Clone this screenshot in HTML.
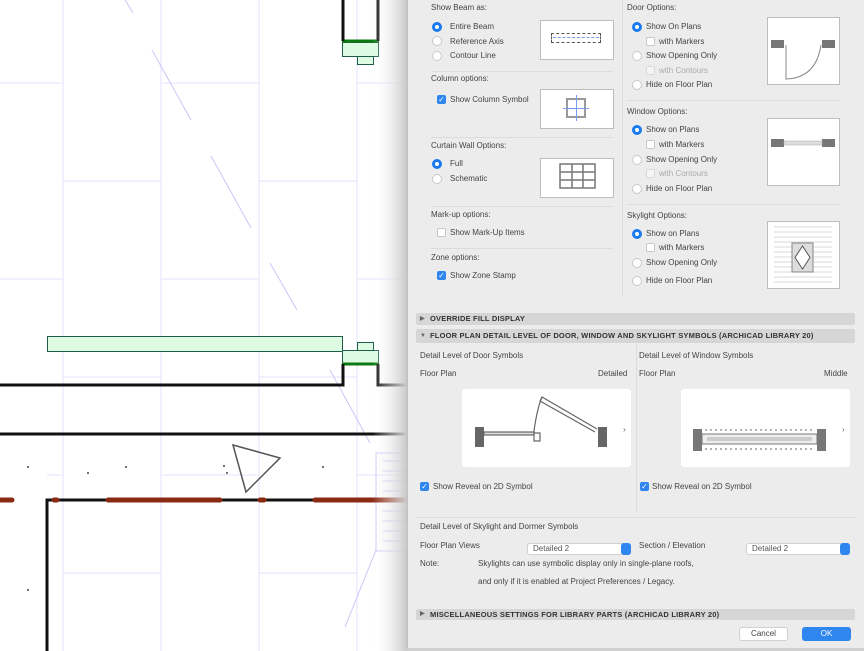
<!DOCTYPE html>
<html><head><meta charset="utf-8"><style>
*{margin:0;padding:0;box-sizing:border-box}
body{width:864px;height:651px;overflow:hidden;background:#fff;font-family:"Liberation Sans",sans-serif;position:relative}
.t{position:absolute;font-size:8px;color:#444;white-space:nowrap;line-height:10px}
.r{position:absolute;width:10px;height:10px;border-radius:50%;background:#fff;border:1px solid #c8c8c8}
.r.on{border:3px solid #1a7bf0;background:#fff}
.c{position:absolute;width:9px;height:9px;border-radius:2px;background:#fff;border:1px solid #c8c8c8}
.c.on{background:#2f86ee;border-color:#2f86ee;color:#fff;font-size:8px;line-height:8px;text-align:center}
.c.dis{opacity:.5}
.box{position:absolute;background:#fff;border:1.5px solid #bdbdbd}
.sep{position:absolute;height:1px;background:#dcdcdc}
.bar{position:absolute;left:416px;width:439px;background:#d6d6d6;border-radius:2px;font-size:7.5px;font-weight:bold;color:#333;padding-left:14px;line-height:12px;letter-spacing:.2px}
.bar span{position:absolute;left:4px;font-size:6px;color:#666}
.sel{position:absolute;height:12px;background:#fff;border:1px solid #d0d0d0;border-radius:3px;font-size:8px;color:#555;padding-left:5px;line-height:10px}
.sel i{position:absolute;right:-1px;top:-1px;width:10px;height:12px;background:#2f86ee;border-radius:3px}
</style></head><body>
<svg width="864" height="651" style="position:absolute;left:0;top:0">
<g stroke="#e6e6ff" stroke-width="1.2" fill="none">
<line x1="63" y1="0" x2="63" y2="651"/><line x1="161" y1="0" x2="161" y2="651"/><line x1="259" y1="0" x2="259" y2="651"/><line x1="357" y1="0" x2="357" y2="651"/>
<path d="M0 83H63M161 83H259M357 83H407M63 181H161M259 181H357M0 279H63M161 279H259M357 279H407M63 377H161M259 377H357M47 475H63M161 475H259M357 475H407M63 573H161M259 573H357"/>
</g>
<g stroke="#c8c8f8" stroke-width="1" fill="none">
<path d="M125 0L133 13M152 50L191 120M211 156L251 228M270 263L297 310M330 370L370 443"/>
<path d="M376 550L345 627"/>
<rect x="376" y="453" width="40" height="98"/>
<path d="M383 461H407M383 471H407M383 481H407M383 491H407M383 501H407M383 511H407M383 521H407M383 531H407M383 541H407"/>
</g>
<g fill="#ddfbe3" stroke="#1f5c4a" stroke-width="1">
<rect x="47.5" y="336.5" width="295" height="15"/>
<rect x="342.5" y="350.5" width="36" height="13"/>
<rect x="357.5" y="342.5" width="16" height="8"/>
<rect x="342.5" y="42.5" width="36" height="14"/>
<rect x="357.5" y="56.5" width="16" height="8"/>
</g>
<g stroke="#0b7a10" stroke-width="3"><line x1="342" y1="41" x2="379" y2="41"/><line x1="342" y1="364" x2="379" y2="364"/></g>
<g stroke="#111" stroke-width="3" fill="none">
<path d="M343 0V41M378 0V41"/>
<path d="M0 385H343V364M378 364V385H407"/>
<path d="M0 434H407"/>
<path d="M47 651V500H407"/>
</g>
<g stroke="#8b2a12" stroke-width="5" stroke-linecap="round">
<path d="M0 500H12M54 500H57M108 500H220M260 500H264M315 500H407"/>
</g>
<polygon points="233,445 280,458 246,492" fill="none" stroke="#555" stroke-width="1.5"/>
<g fill="#444"><circle cx="28" cy="467" r="1"/><circle cx="88" cy="473" r="1"/><circle cx="126" cy="467" r="1"/><circle cx="224" cy="466" r="1"/><circle cx="227" cy="473" r="1"/><circle cx="323" cy="467" r="1"/><circle cx="28" cy="590" r="1"/></g>
<defs><linearGradient id="sh" x1="0" x2="1"><stop offset="0" stop-color="#fff" stop-opacity="0"/><stop offset="1" stop-color="#c8c8c8"/></linearGradient></defs>
<rect x="372" y="0" width="35" height="651" fill="url(#sh)"/>
</svg>
<div style="position:absolute;left:407px;top:0;width:457px;height:648px;background:#ececec;border-left:1px solid #c0c0c0"></div>
<div style="position:absolute;left:407px;top:648px;width:457px;height:3px;background:#cfcfcf"></div>

<div class="t" style="left:431px;top:3px">Show Beam as:</div>
<div class="r on" style="left:432px;top:22px"></div><div class="t" style="left:450px;top:22px">Entire Beam</div>
<div class="r" style="left:432px;top:36px"></div><div class="t" style="left:450px;top:37px">Reference Axis</div>
<div class="r" style="left:432px;top:51px"></div><div class="t" style="left:450px;top:51px">Contour Line</div>
<div class="box" style="left:540px;top:20px;width:74px;height:40px"><div style="position:absolute;left:10px;top:12px;width:50px;height:10px;border:1px dashed #555"></div><div style="position:absolute;left:12px;top:16px;width:46px;border-top:1px dashed #7a9cf0"></div></div>
<div class="sep" style="left:431px;top:71px;width:182px"></div>
<div class="t" style="left:431px;top:74px">Column options:</div>
<div class="c on" style="left:437px;top:95px">✓</div><div class="t" style="left:450px;top:95px">Show Column Symbol</div>
<div class="box" style="left:540px;top:89px;width:74px;height:40px"><div style="position:absolute;left:25px;top:8px;width:20px;height:20px;border:2px solid #999"></div><div style="position:absolute;left:22px;top:18px;width:26px;border-top:1px solid #7a9cf0"></div><div style="position:absolute;left:35px;top:5px;height:26px;border-left:1px solid #7a9cf0"></div></div>
<div class="sep" style="left:431px;top:137px;width:182px"></div>
<div class="t" style="left:431px;top:141px">Curtain Wall Options:</div>
<div class="r on" style="left:432px;top:159px"></div><div class="t" style="left:450px;top:159px">Full</div>
<div class="r" style="left:432px;top:174px"></div><div class="t" style="left:450px;top:174px">Schematic</div>
<div class="box" style="left:540px;top:158px;width:74px;height:40px"><svg width="40" height="28" style="position:absolute;left:18px;top:4px"><g fill="none" stroke="#777" stroke-width="1.5"><rect x="1" y="1" width="35" height="24"/><path d="M1 9H36M1 17H36M13 1V25M24 1V25"/></g></svg></div>
<div class="sep" style="left:431px;top:206px;width:182px"></div>
<div class="t" style="left:431px;top:210px">Mark-up options:</div>
<div class="c" style="left:437px;top:228px"></div><div class="t" style="left:450px;top:228px">Show Mark-Up Items</div>
<div class="sep" style="left:431px;top:248px;width:182px"></div>
<div class="t" style="left:431px;top:253px">Zone options:</div>
<div class="c on" style="left:437px;top:271px">✓</div><div class="t" style="left:450px;top:271px">Show Zone Stamp</div>
<div class="sep" style="left:622px;top:0;width:1px;height:297px"></div>

<div class="t" style="left:627px;top:3px">Door Options:</div>
<div class="r on" style="left:632px;top:22px"></div><div class="t" style="left:646px;top:22px">Show On Plans</div>
<div class="c" style="left:646px;top:37px"></div><div class="t" style="left:659px;top:37px">with Markers</div>
<div class="r" style="left:632px;top:51px"></div><div class="t" style="left:646px;top:51px">Show Opening Only</div>
<div class="c dis" style="left:646px;top:66px"></div><div class="t" style="left:659px;top:66px;color:#aaa">with Contours</div>
<div class="r" style="left:632px;top:80px"></div><div class="t" style="left:646px;top:80px">Hide on Floor Plan</div>
<div class="box" style="left:767px;top:17px;width:73px;height:68px"><svg width="70" height="66" style="position:absolute;left:0;top:0"><rect x="3" y="22" width="13" height="8" fill="#777"/><rect x="54" y="22" width="13" height="8" fill="#777"/><path d="M18 27V61Q48 60 53 27" fill="none" stroke="#888" stroke-width="1"/></svg></div>
<div class="sep" style="left:627px;top:100px;width:213px"></div>
<div class="t" style="left:627px;top:107px">Window Options:</div>
<div class="r on" style="left:632px;top:125px"></div><div class="t" style="left:646px;top:125px">Show on Plans</div>
<div class="c" style="left:646px;top:140px"></div><div class="t" style="left:659px;top:140px">with Markers</div>
<div class="r" style="left:632px;top:155px"></div><div class="t" style="left:646px;top:155px">Show Opening Only</div>
<div class="c dis" style="left:646px;top:169px"></div><div class="t" style="left:659px;top:169px;color:#aaa">with Contours</div>
<div class="r" style="left:632px;top:184px"></div><div class="t" style="left:646px;top:184px">Hide on Floor Plan</div>
<div class="box" style="left:767px;top:118px;width:73px;height:68px"><svg width="70" height="66"><rect x="3" y="20" width="13" height="8" fill="#777"/><rect x="54" y="20" width="13" height="8" fill="#777"/><rect x="16" y="22" width="38" height="4" fill="#ddd" stroke="#aaa" stroke-width=".5"/></svg></div>
<div class="sep" style="left:627px;top:204px;width:213px"></div>
<div class="t" style="left:627px;top:211px">Skylight Options:</div>
<div class="r on" style="left:632px;top:229px"></div><div class="t" style="left:646px;top:229px">Show on Plans</div>
<div class="c" style="left:646px;top:243px"></div><div class="t" style="left:659px;top:243px">with Markers</div>
<div class="r" style="left:632px;top:258px"></div><div class="t" style="left:646px;top:258px">Show Opening Only</div>
<div class="r" style="left:632px;top:276px"></div><div class="t" style="left:646px;top:276px">Hide on Floor Plan</div>
<div class="box" style="left:767px;top:221px;width:73px;height:68px"><svg width="70" height="66"><g stroke="#ccc" stroke-width=".8"><path d="M6 5H64M6 10H64M6 15H64M6 20H64M6 25H64M6 30H64M6 35H64M6 40H64M6 45H64M6 50H64M6 55H64M6 60H64"/></g><rect x="24" y="21" width="21" height="29" fill="#ddd" stroke="#888"/><polygon points="34.5,24 42,35.5 34.5,47 27,35.5" fill="#fff" stroke="#555"/></svg></div>

<div class="bar" style="top:313px;height:12px"><span>▶</span>OVERRIDE FILL DISPLAY</div>
<div class="bar" style="top:329px;height:14px;line-height:14px"><span>▼</span>FLOOR PLAN DETAIL LEVEL OF DOOR, WINDOW AND SKYLIGHT SYMBOLS (ARCHICAD LIBRARY 20)</div>

<div class="t" style="left:420px;top:351px">Detail Level of Door Symbols</div>
<div class="t" style="left:420px;top:369px">Floor Plan</div>
<div class="t" style="left:598px;top:369px">Detailed</div>
<div class="box" style="left:462px;top:389px;width:169px;height:78px;border:none;border-radius:3px"><svg width="169" height="78"><g fill="#666"><rect x="13" y="38" width="9" height="20"/><rect x="136" y="38" width="9" height="20"/></g><g fill="none" stroke="#666" stroke-width="1.2"><rect x="22" y="43" width="50" height="3" fill="#ddd"/><path d="M72 42V52H78V44H72"/><path d="M72 42Q75 20 80 8L135 40"/><path d="M80 8L78 12L133 43"/></g><text x="161" y="43" font-size="8" fill="#666" font-family="Liberation Sans">›</text></svg></div>
<div class="sep" style="left:636px;top:345px;width:1px;height:167px"></div>
<div class="t" style="left:639px;top:351px">Detail Level of Window Symbols</div>
<div class="t" style="left:639px;top:369px">Floor Plan</div>
<div class="t" style="left:824px;top:369px">Middle</div>
<div class="box" style="left:681px;top:389px;width:169px;height:78px;border:none;border-radius:3px"><svg width="169" height="78"><g fill="#777"><rect x="12" y="40" width="9" height="22"/><rect x="136" y="40" width="9" height="22"/></g><rect x="21" y="45" width="115" height="10" fill="#eee" stroke="#777"/><rect x="26" y="48" width="105" height="4" fill="#ccc"/><g stroke="#666" stroke-dasharray="2,3"><path d="M24 41H134M24 60H134"/></g><text x="161" y="43" font-size="8" fill="#666" font-family="Liberation Sans">›</text></svg></div>
<div class="c on" style="left:420px;top:482px">✓</div><div class="t" style="left:433px;top:482px">Show Reveal on 2D Symbol</div>
<div class="c on" style="left:640px;top:482px">✓</div><div class="t" style="left:652px;top:482px">Show Reveal on 2D Symbol</div>
<div class="sep" style="left:416px;top:517px;width:439px"></div>
<div class="t" style="left:420px;top:522px">Detail Level of Skylight and Dormer Symbols</div>
<div class="t" style="left:420px;top:541px">Floor Plan Views</div>
<div class="sel" style="left:527px;top:543px;width:104px">Detailed 2<i></i></div>
<div class="t" style="left:639px;top:541px">Section / Elevation</div>
<div class="sel" style="left:746px;top:543px;width:104px">Detailed 2<i></i></div>
<div class="t" style="left:420px;top:559px">Note:</div>
<div class="t" style="left:478px;top:559px">Skylights can use symbolic display only in single-plane roofs,</div>
<div class="t" style="left:478px;top:577px">and only if it is enabled at Project Preferences / Legacy.</div>
<div class="bar" style="top:609px;height:11px;line-height:11px"><span>▶</span>MISCELLANEOUS SETTINGS FOR LIBRARY PARTS (ARCHICAD LIBRARY 20)</div>
<div style="position:absolute;left:739px;top:627px;width:49px;height:14px;background:#fff;border:1px solid #d0d0d0;border-radius:3px;font-size:8px;color:#444;text-align:center;line-height:12px">Cancel</div>
<div style="position:absolute;left:802px;top:627px;width:49px;height:14px;background:#2f86ee;border-radius:3px;font-size:8px;color:#fff;text-align:center;line-height:14px">OK</div>
</body></html>
